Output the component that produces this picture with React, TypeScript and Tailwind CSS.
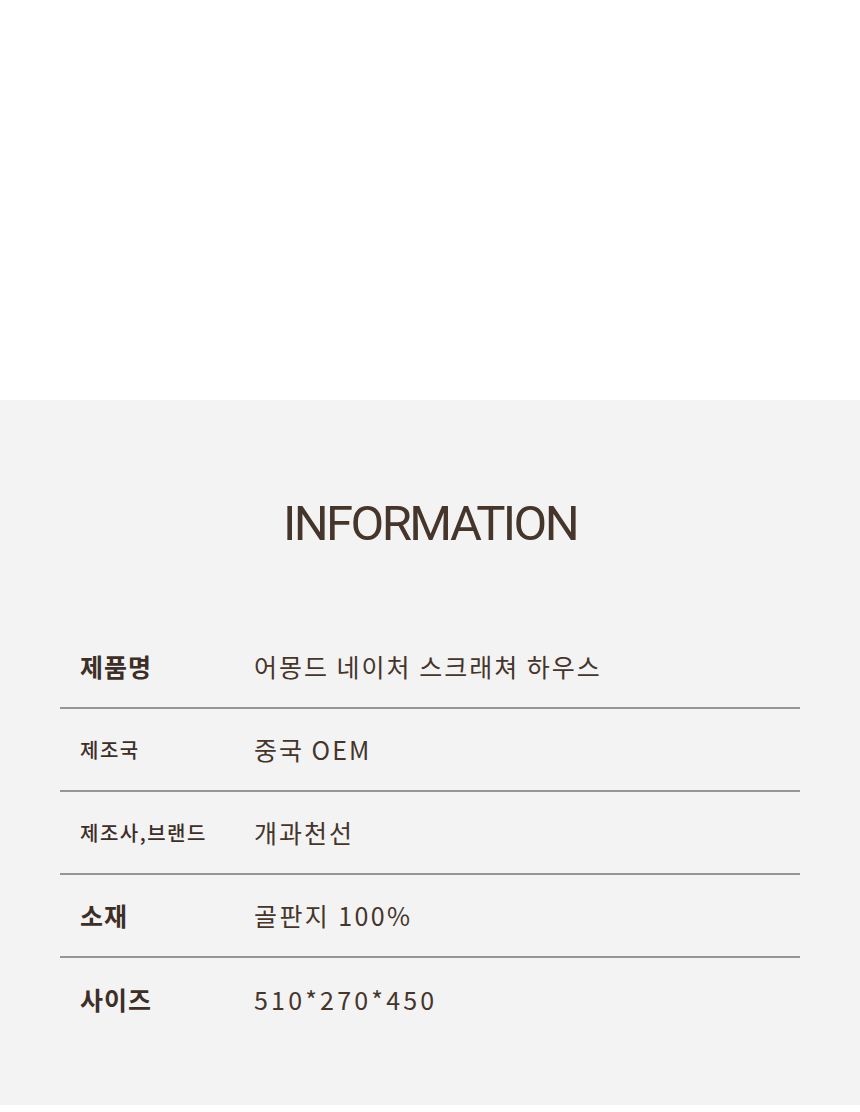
export default function App() {
  const rows: { label: string; value: string; big: boolean; vt: string }[] = [
    { label: "제품명", value: "어몽드 네이처 스크래쳐 하우스", big: true, vt: "tracking-[2px]" },
    { label: "제조국", value: "중국 OEM", big: false, vt: "tracking-[2px]" },
    { label: "제조사,브랜드", value: "개과천선", big: false, vt: "tracking-[2px]" },
    { label: "소재", value: "골판지 100%", big: true, vt: "tracking-[2.4px]" },
    { label: "사이즈", value: "510*270*450", big: true, vt: "tracking-[3.2px]" },
  ];
  return (
    <div className="w-[860px] bg-white" style={{ fontFamily: '"Noto Sans CJK KR", "Noto Sans", sans-serif' }}>
      <div className="h-[400px] bg-white" />
      <div className="bg-[#f3f3f3] h-[705px] pt-[92px]">
        <h1 className="text-center text-[49px] leading-[64px] text-[#45352b] font-normal tracking-[-2.6px] [font-family:Roboto,sans-serif]">
          INFORMATION
        </h1>
        <div className="mx-[60px] mt-[70px]">
          {rows.map((r, i) => (
            <div
              key={i}
              className={`flex items-center h-[83px] ${i < rows.length - 1 ? "border-b-2 border-[#999391]" : ""}`}
            >
              <div
                className={`w-[194px] pl-[20px] text-[#3d2f27] ${
                  r.big ? "text-[25px] font-bold tracking-[1px]" : "text-[20px] font-medium tracking-[1.5px]"
                }`}
              >
                {r.label}
              </div>
              <div className={`text-[25px] text-[#45352b] font-normal ${r.vt}`}>{r.value}</div>
            </div>
          ))}
        </div>
      </div>
      <div className="h-[7px] bg-white" />
    </div>
  );
}
